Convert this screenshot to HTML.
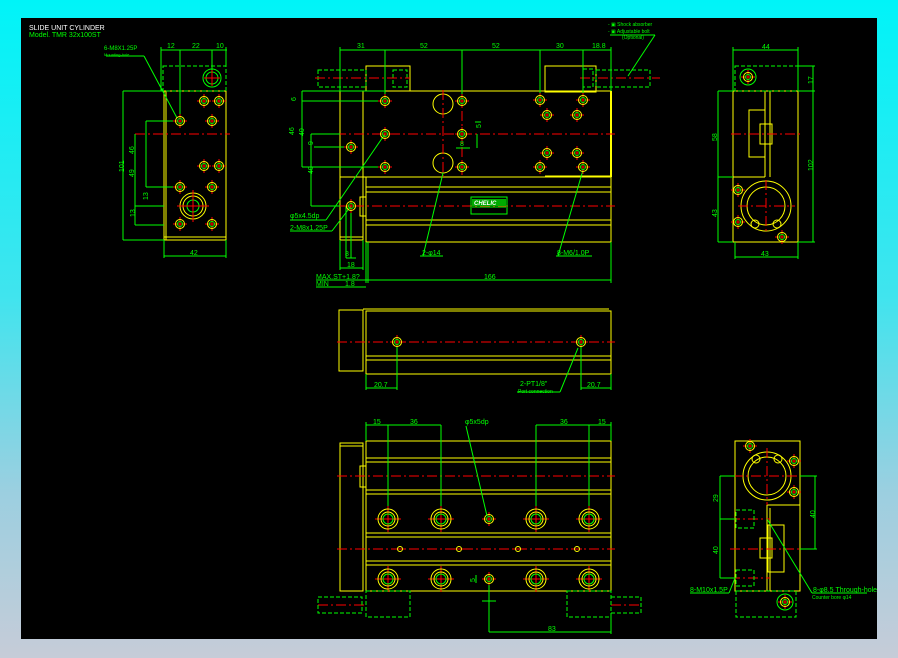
<!DOCTYPE html>
<html><head><meta charset="utf-8"><style>
html,body{margin:0;padding:0;width:898px;height:658px;overflow:hidden;background:linear-gradient(180deg,#00f4f8 0%,#40e4ee 45%,#9ccfe0 75%,#c6ccd8 100%);}
svg{position:absolute;left:0;top:0}
text{font-family:"Liberation Sans",sans-serif;font-size:7px;fill:#00ff00}
</style></head><body>
<svg width="898" height="658" viewBox="0 0 898 658">
<defs>
<g id="h"><line x1="-7" y1="0" x2="7" y2="0" stroke="#f00"/><line x1="0" y1="-7" x2="0" y2="7" stroke="#f00"/><circle r="4.5" fill="none" stroke="#ff0"/><circle r="2.5" fill="none" stroke="#0f0"/></g>
<g id="H"><line x1="-13" y1="0" x2="13" y2="0" stroke="#f00"/><line x1="0" y1="-13" x2="0" y2="13" stroke="#f00"/><circle r="10" fill="none" stroke="#ff0"/><circle r="7" fill="none" stroke="#ff0"/><circle r="5" fill="none" stroke="#0f0"/></g>
<g id="s"><line x1="-5" y1="0" x2="5" y2="0" stroke="#f00"/><circle r="2.5" fill="none" stroke="#ff0"/></g>
</defs>
<rect x="21" y="18" width="856" height="621" fill="#000"/>
<g fill="none" stroke-width="1">
<!-- title -->
<text x="29" y="30" style="fill:#fff;font-size:7px">SLIDE UNIT CYLINDER</text>
<text x="29" y="37">Model. TMR 32x100ST</text>

<!-- LEFT END VIEW -->
<g stroke="#ff0">
<rect x="164" y="91" width="62" height="149"/>
<line x1="166" y1="91" x2="166" y2="240"/>
<line x1="164" y1="237" x2="226" y2="237"/>
</g>
<rect x="163" y="66" width="63" height="25" stroke="#0f0" stroke-dasharray="4,2"/>
<line x1="135" y1="134" x2="230" y2="134" stroke="#f00" stroke-dasharray="10,3,2,3"/>
<g stroke="#0f0">
<line x1="161" y1="50" x2="227" y2="50"/><line x1="161" y1="47" x2="161" y2="91"/><line x1="226" y1="47" x2="226" y2="66"/>
<line x1="180" y1="50" x2="180" y2="121"/><line x1="212" y1="50" x2="212" y2="78"/>
<line x1="123" y1="91" x2="123" y2="240"/><line x1="123" y1="91" x2="164" y2="91"/><line x1="123" y1="240" x2="164" y2="240"/>
<line x1="135" y1="134" x2="135" y2="225"/><line x1="135" y1="206" x2="164" y2="206"/><line x1="135" y1="225" x2="164" y2="225"/>
<line x1="146" y1="121" x2="146" y2="187"/><line x1="146" y1="121" x2="180" y2="121"/><line x1="146" y1="187" x2="180" y2="187"/>
<line x1="164" y1="256" x2="226" y2="256"/><line x1="164" y1="240" x2="164" y2="258"/><line x1="226" y1="240" x2="226" y2="258"/>
<line x1="106" y1="56" x2="144" y2="56"/><line x1="144" y1="56" x2="177" y2="118"/>
<circle cx="212" cy="78" r="9"/><circle cx="212" cy="78" r="6"/>
</g>
<text x="167" y="48">12</text><text x="192" y="48">22</text><text x="216" y="48">10</text>
<text x="118" y="170" transform="rotate(-90 122 168)">101</text>
<text x="132" y="152" transform="rotate(-90 134 152)">46</text>
<text x="132" y="175" transform="rotate(-90 134 175)">49</text>
<text x="144" y="200" transform="rotate(-90 146 198)">13</text>
<text x="130" y="216" transform="rotate(-90 133 214)">13</text>
<text x="190" y="255">42</text>
<text x="104" y="50" style="font-size:6px">6-M8X1.25P</text>
<text x="104" y="56" style="font-size:4px">Mounting-hole</text>
<use href="#h" x="180" y="121"/><use href="#h" x="212" y="121"/><use href="#h" x="204" y="101"/><use href="#h" x="219" y="101"/>
<use href="#h" x="204" y="166"/><use href="#h" x="219" y="166"/><use href="#h" x="180" y="187"/><use href="#h" x="212" y="187"/>
<use href="#h" x="180" y="224"/><use href="#h" x="212" y="224"/>
<g stroke="#ff0"><circle cx="193" cy="206" r="13"/><circle cx="193" cy="206" r="10"/></g><circle cx="193" cy="206" r="6" stroke="#0f0"/>
<line x1="177" y1="206" x2="209" y2="206" stroke="#f00"/><line x1="193" y1="190" x2="193" y2="222" stroke="#f00"/>
<line x1="212" y1="70" x2="212" y2="86" stroke="#f00"/><line x1="204" y1="78" x2="220" y2="78" stroke="#f00"/>

<!-- MAIN TOP VIEW -->
<g stroke="#ff0">
<rect x="340" y="91" width="271" height="86"/>
<line x1="363" y1="91" x2="363" y2="240"/><line x1="340" y1="91" x2="340" y2="240"/><line x1="340" y1="240" x2="363" y2="240"/>
<line x1="340" y1="237" x2="363" y2="237"/>
<rect x="366" y="177" width="245" height="65"/>
<line x1="366" y1="187" x2="611" y2="187"/><line x1="366" y1="192" x2="611" y2="192"/>
<line x1="366" y1="220" x2="611" y2="220"/><line x1="366" y1="225" x2="611" y2="225"/>
<rect x="360" y="197" width="6" height="19"/>
<rect x="366" y="66" width="44" height="25"/><rect x="545" y="66" width="51" height="26"/>
<line x1="545" y1="176" x2="611" y2="176"/>
<circle cx="443" cy="104" r="10"/><circle cx="443" cy="163" r="10"/>
</g>
<line x1="611" y1="91" x2="611" y2="177" stroke="#ff0" stroke-width="2"/>
<g stroke="#0f0" stroke-dasharray="4,2">
<rect x="318" y="70" width="48" height="17"/><rect x="393" y="70" width="14" height="17"/>
<rect x="596" y="70" width="54" height="17"/><rect x="583" y="69" width="10" height="18"/>
</g>
<g stroke="#f00" stroke-dasharray="10,3,2,3">
<line x1="315" y1="78" x2="410" y2="78"/><line x1="580" y1="78" x2="660" y2="78"/>
<line x1="336" y1="134" x2="615" y2="134"/><line x1="336" y1="206" x2="615" y2="206"/>
<line x1="462" y1="93" x2="462" y2="175"/><line x1="443" y1="90" x2="443" y2="177"/>
</g>
<g stroke="#0f0">
<line x1="340" y1="50" x2="611" y2="50"/>
<line x1="340" y1="47" x2="340" y2="91"/><line x1="611" y1="47" x2="611" y2="91"/>
<line x1="385" y1="50" x2="385" y2="101"/><line x1="462" y1="50" x2="462" y2="101"/><line x1="540" y1="50" x2="540" y2="100"/><line x1="583" y1="50" x2="583" y2="100"/>
<line x1="302" y1="91" x2="385" y2="91"/><line x1="302" y1="101" x2="385" y2="101"/>
<line x1="302" y1="91" x2="302" y2="167"/><line x1="302" y1="167" x2="385" y2="167"/>
<line x1="311" y1="134" x2="311" y2="206"/><line x1="311" y1="134" x2="340" y2="134"/><line x1="311" y1="206" x2="340" y2="206"/>
<line x1="314" y1="147" x2="351" y2="147"/>
<line x1="290" y1="220" x2="326" y2="220"/><line x1="326" y1="220" x2="385" y2="134"/>
<line x1="290" y1="231" x2="332" y2="231"/><line x1="332" y1="231" x2="351" y2="206"/>
<line x1="346" y1="206" x2="346" y2="258"/><line x1="351" y1="206" x2="351" y2="258"/><line x1="346" y1="258" x2="356" y2="258"/>
<line x1="340" y1="240" x2="340" y2="270"/><line x1="340" y1="268" x2="363" y2="268"/><line x1="363" y1="240" x2="363" y2="270"/>
<line x1="316" y1="280" x2="611" y2="280"/><line x1="366" y1="242" x2="366" y2="283"/><line x1="368" y1="242" x2="368" y2="283"/><line x1="611" y1="242" x2="611" y2="283"/>
<line x1="316" y1="287" x2="366" y2="287"/>
<line x1="420" y1="256" x2="443" y2="256"/><line x1="423" y1="256" x2="443" y2="173"/>
<line x1="556" y1="256" x2="592" y2="256"/><line x1="558" y1="256" x2="583" y2="170"/>
<line x1="477" y1="134" x2="477" y2="148"/><line x1="475" y1="122" x2="481" y2="122"/>
<line x1="456" y1="148" x2="470" y2="148"/>
<rect x="471" y="197" width="36" height="17"/><line x1="472" y1="207" x2="506" y2="207"/>
</g>
<rect x="472" y="199" width="34" height="7" fill="#0a0"/>
<text x="474" y="205" style="fill:#fff;font-size:6px;font-style:italic;font-weight:bold">CHELIC</text>
<text x="357" y="48">31</text><text x="420" y="48">52</text><text x="492" y="48">52</text><text x="556" y="48">30</text><text x="592" y="48">18.8</text>
<text x="292" y="101" transform="rotate(-90 294 99)">6</text>
<text x="290" y="135" transform="rotate(-90 292 133)">46</text>
<text x="300" y="136" transform="rotate(-90 302 134)">40</text>
<text x="309" y="145" transform="rotate(-90 311 143)">9</text>
<text x="309" y="174" transform="rotate(-90 311 172)">40</text>
<text x="477" y="128" transform="rotate(-90 479 126)">5</text>
<text x="460" y="146">8</text>
<text x="290" y="218">φ5x4.5dp</text>
<text x="290" y="230">2-M8x1.25P</text>
<text x="345" y="256">8</text><text x="347" y="267">18</text>
<text x="316" y="279">MAX.ST+1.8?</text><text x="316" y="286">MIN</text><text x="345" y="286">1.8</text>
<text x="484" y="279">166</text>
<text x="422" y="255">2-φ14</text><text x="557" y="255">8-M6/1.0P</text>
<use href="#h" x="385" y="101"/><use href="#h" x="462" y="101"/><use href="#h" x="540" y="100"/><use href="#h" x="583" y="100"/>
<use href="#h" x="547" y="115"/><use href="#h" x="577" y="115"/><use href="#h" x="385" y="134"/><use href="#h" x="462" y="134"/>
<use href="#h" x="547" y="153"/><use href="#h" x="577" y="153"/><use href="#h" x="385" y="167"/><use href="#h" x="462" y="167"/>
<use href="#h" x="540" y="167"/><use href="#h" x="583" y="167"/><use href="#h" x="351" y="147"/><use href="#h" x="351" y="206"/>

<!-- legend -->
<text x="608" y="26" style="font-size:5px">- ▣ Shock absorber</text>
<text x="608" y="33" style="font-size:5px">- ▣ Adjustable bolt</text>
<text x="622" y="39" style="font-size:5px">(Optional)</text>
<line x1="610" y1="35" x2="655" y2="35" stroke="#0f0"/><line x1="655" y1="35" x2="628" y2="76" stroke="#0f0"/>

<!-- MIDDLE SIDE VIEW -->
<g stroke="#ff0">
<rect x="339" y="310" width="24" height="61"/>
<rect x="366" y="311" width="245" height="63"/>
<line x1="363" y1="309" x2="609" y2="309"/>
<line x1="366" y1="356" x2="611" y2="356"/><line x1="366" y1="360" x2="611" y2="360"/>
</g>
<line x1="337" y1="342" x2="615" y2="342" stroke="#f00" stroke-dasharray="10,3,2,3"/>
<use href="#h" x="397" y="342"/><use href="#h" x="581" y="342"/>
<g stroke="#0f0">
<line x1="366" y1="388" x2="397" y2="388"/><line x1="366" y1="374" x2="366" y2="390"/><line x1="397" y1="347" x2="397" y2="390"/>
<line x1="581" y1="388" x2="611" y2="388"/><line x1="581" y1="347" x2="581" y2="390"/><line x1="611" y1="374" x2="611" y2="390"/>
<line x1="517" y1="392" x2="560" y2="392"/><line x1="560" y1="392" x2="578" y2="348"/>
</g>
<text x="374" y="387">20.7</text><text x="587" y="387">20.7</text>
<text x="520" y="386">2-PT1/8"</text><text x="518" y="393" style="font-size:5px">Port connection</text>

<!-- BOTTOM VIEW -->
<g stroke="#ff0">
<rect x="340" y="443" width="23" height="148"/><line x1="340" y1="446" x2="363" y2="446"/>
<rect x="366" y="441" width="245" height="150"/>
<rect x="360" y="466" width="6" height="21"/>
<line x1="366" y1="458" x2="611" y2="458"/><line x1="366" y1="462" x2="611" y2="462"/>
<line x1="366" y1="490" x2="611" y2="490"/><line x1="366" y1="494" x2="611" y2="494"/>
<line x1="366" y1="533" x2="611" y2="533"/><line x1="366" y1="537" x2="611" y2="537"/>
<line x1="366" y1="561" x2="611" y2="561"/><line x1="366" y1="565" x2="611" y2="565"/>
</g>
<g stroke="#f00" stroke-dasharray="10,3,2,3">
<line x1="337" y1="476" x2="615" y2="476"/><line x1="337" y1="549" x2="615" y2="549"/>
<line x1="318" y1="605" x2="366" y2="605"/><line x1="611" y1="605" x2="640" y2="605"/>
</g>
<use href="#H" x="388" y="519"/><use href="#H" x="441" y="519"/><use href="#H" x="536" y="519"/><use href="#H" x="589" y="519"/>
<use href="#H" x="388" y="579"/><use href="#H" x="441" y="579"/><use href="#H" x="536" y="579"/><use href="#H" x="589" y="579"/>
<use href="#h" x="489" y="519"/><use href="#h" x="489" y="579"/>
<use href="#s" x="400" y="549"/><use href="#s" x="459" y="549"/><use href="#s" x="518" y="549"/><use href="#s" x="577" y="549"/>
<g stroke="#0f0" stroke-dasharray="4,2">
<rect x="366" y="591" width="44" height="26"/><rect x="567" y="591" width="44" height="26"/>
<rect x="318" y="597" width="44" height="16"/><rect x="611" y="597" width="30" height="16"/>
</g>
<g stroke="#0f0">
<line x1="366" y1="425" x2="441" y2="425"/><line x1="366" y1="422" x2="366" y2="441"/>
<line x1="388" y1="425" x2="388" y2="506"/><line x1="441" y1="425" x2="441" y2="506"/>
<line x1="536" y1="425" x2="611" y2="425"/><line x1="611" y1="422" x2="611" y2="441"/>
<line x1="536" y1="425" x2="536" y2="506"/><line x1="589" y1="425" x2="589" y2="506"/>
<line x1="466" y1="426" x2="487" y2="516"/>
<line x1="489" y1="585" x2="489" y2="632"/><line x1="489" y1="632" x2="611" y2="632"/><line x1="611" y1="617" x2="611" y2="634"/>
<line x1="482" y1="601" x2="496" y2="601"/><line x1="476" y1="575" x2="476" y2="583"/>
</g>
<text x="373" y="424">15</text><text x="410" y="424">36</text><text x="560" y="424">36</text><text x="598" y="424">15</text>
<text x="465" y="424">φ5x5dp</text><text x="548" y="631">83</text>
<text x="471" y="582" transform="rotate(-90 473 580)">5</text>

<!-- RIGHT TOP VIEW -->
<g stroke="#ff0">
<rect x="733" y="91" width="65" height="151"/>
<line x1="765" y1="91" x2="765" y2="177"/><line x1="770" y1="91" x2="770" y2="177"/>
<line x1="733" y1="177" x2="765" y2="177"/>
<rect x="749" y="110" width="16" height="47"/><rect x="760" y="124" width="12" height="20"/>
<circle cx="766" cy="206" r="25"/><circle cx="766" cy="206" r="19"/>
<circle cx="755" cy="224" r="4"/><circle cx="777" cy="224" r="4"/>
</g>
<rect x="735" y="66" width="63" height="25" stroke="#0f0" stroke-dasharray="4,2"/>
<g stroke="#f00" stroke-dasharray="10,3,2,3">
<line x1="731" y1="134" x2="800" y2="134"/><line x1="738" y1="206" x2="795" y2="206"/><line x1="766" y1="180" x2="766" y2="233"/>
</g>
<use href="#h" x="738" y="190"/><use href="#h" x="738" y="222"/><use href="#h" x="782" y="237"/><use href="#h" x="748" y="77"/>
<g stroke="#0f0">
<line x1="733" y1="50" x2="798" y2="50"/><line x1="733" y1="47" x2="733" y2="91"/><line x1="798" y1="47" x2="798" y2="91"/>
<line x1="718" y1="91" x2="718" y2="242"/><line x1="718" y1="91" x2="733" y2="91"/><line x1="718" y1="177" x2="733" y2="177"/><line x1="718" y1="242" x2="733" y2="242"/>
<line x1="813" y1="66" x2="813" y2="242"/><line x1="798" y1="66" x2="815" y2="66"/><line x1="798" y1="91" x2="815" y2="91"/><line x1="798" y1="242" x2="815" y2="242"/>
<line x1="735" y1="257" x2="798" y2="257"/><line x1="735" y1="242" x2="735" y2="259"/><line x1="798" y1="242" x2="798" y2="259"/>
<circle cx="748" cy="77" r="8"/>
</g>
<text x="762" y="49">44</text><text x="761" y="256">43</text>
<text x="708" y="136" transform="rotate(-90 715 134)">58</text>
<text x="708" y="212" transform="rotate(-90 715 210)">43</text>
<text x="805" y="167" transform="rotate(-90 811 165)">102</text>
<text x="806" y="81" transform="rotate(-90 811 79)">17</text>

<!-- RIGHT BOTTOM VIEW -->
<g stroke="#ff0">
<rect x="735" y="441" width="65" height="150"/>
<circle cx="767" cy="476" r="24"/><circle cx="767" cy="476" r="19"/>
<line x1="767" y1="505" x2="800" y2="505"/><line x1="767" y1="505" x2="767" y2="591"/><line x1="770" y1="508" x2="770" y2="591"/>
<rect x="768" y="525" width="16" height="47"/><rect x="760" y="538" width="12" height="20"/>
<circle cx="756" cy="459" r="4"/><circle cx="778" cy="459" r="4"/>
</g>
<g stroke="#f00" stroke-dasharray="10,3,2,3">
<line x1="733" y1="476" x2="800" y2="476"/><line x1="767" y1="448" x2="767" y2="505"/>
<line x1="730" y1="519" x2="770" y2="519"/><line x1="730" y1="549" x2="800" y2="549"/><line x1="730" y1="578" x2="770" y2="578"/>
</g>
<use href="#h" x="750" y="446"/><use href="#h" x="794" y="461"/><use href="#h" x="794" y="492"/><use href="#h" x="785" y="602"/>
<g stroke="#0f0" stroke-dasharray="4,2">
<rect x="736" y="591" width="60" height="26"/>
<rect x="736" y="510" width="18" height="18"/><rect x="736" y="570" width="18" height="16"/>
</g>
<g stroke="#0f0">
<line x1="720" y1="476" x2="720" y2="578"/><line x1="720" y1="476" x2="735" y2="476"/><line x1="720" y1="519" x2="735" y2="519"/><line x1="720" y1="578" x2="735" y2="578"/>
<line x1="815" y1="476" x2="815" y2="549"/><line x1="800" y1="476" x2="817" y2="476"/><line x1="800" y1="549" x2="817" y2="549"/>
<line x1="690" y1="593" x2="729" y2="593"/><line x1="729" y1="593" x2="735" y2="578"/>
<line x1="812" y1="593" x2="867" y2="593"/><line x1="812" y1="593" x2="767" y2="519"/>
<circle cx="785" cy="602" r="8"/>
</g>
<text x="711" y="499" transform="rotate(-90 716 497)">29</text>
<text x="711" y="551" transform="rotate(-90 716 549)">40</text>
<text x="808" y="515" transform="rotate(-90 813 513)">40</text>
<text x="690" y="592">8-M10x1.5P</text>
<text x="813" y="592">8-φ8.5 Through-hole</text>
<text x="812" y="599" style="font-size:5px">Counter bore  φ14</text>
</g>
</svg>
</body></html>
